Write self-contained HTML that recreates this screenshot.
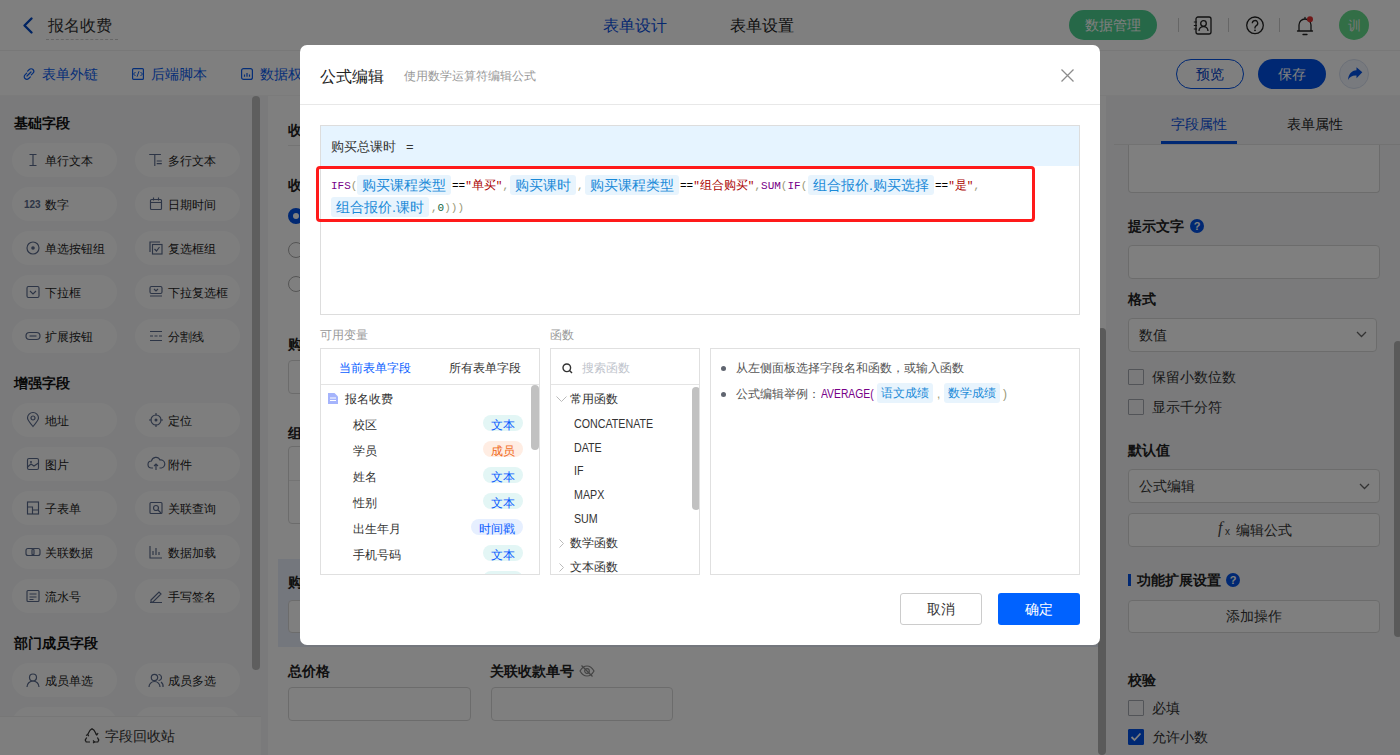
<!DOCTYPE html>
<html><head><meta charset="utf-8">
<style>
*{box-sizing:border-box;margin:0;padding:0}
html,body{width:1400px;height:755px;overflow:hidden;background:#fff;font-family:"Liberation Sans",sans-serif;color:#333}
.a{position:absolute}
.t{position:absolute;white-space:nowrap;line-height:1}
svg{position:absolute;overflow:visible}
/* background page */
#hdr{left:0;top:0;width:1400px;height:51px;background:#fff;border-bottom:1px solid #f0f0f0}
#tb{left:0;top:51px;width:1400px;height:45px;background:#fff;border-bottom:1px solid #f4f4f4}
#lp{left:0;top:96px;width:268px;height:659px;background:#f4f5f7}
.pill{position:absolute;width:105px;height:34px;border-radius:17px;background:#fdfdfd}
.pill .t{left:33px;top:12px;font-size:12px;color:#222}
.sec{position:absolute;left:14px;font-size:14px;font-weight:bold;color:#111}
#cv{left:268px;top:96px;width:838px;height:659px;background:#fff}
#rp{left:1106px;top:96px;width:294px;height:659px;background:#f4f5f7}
.lbl{position:absolute;font-size:14px;font-weight:bold;color:#222;white-space:nowrap;line-height:1}
.inp{position:absolute;background:#fff;border:1px solid #d9d9d9;border-radius:4px}
.cb{position:absolute;width:16px;height:16px;border:1px solid #a4a8b0;background:transparent;border-radius:1px}
#ov{left:0;top:0;width:1400px;height:755px;background:rgba(0,0,0,0.5)}
/* modal */
#md{left:300px;top:45px;width:800px;height:600px;background:#fff;border-radius:7px}
.m{position:absolute}
.tag{display:inline-block;background:#e8f4fd;color:#1f8ad8;border-radius:3px;padding:0 5px;font-family:"Liberation Sans",sans-serif}
.cs{position:absolute;height:20px;line-height:20px;font-family:"Liberation Mono",monospace;font-size:11px;color:#000;white-space:nowrap}
.kw{color:#708}.br{color:#997}.st{color:#a00}.nm{color:#164}
.tg{position:absolute;height:20px;line-height:20px;background:#e8f4fd;color:#1a8ad8;border-radius:3px;font-size:14px;text-align:center;white-space:nowrap}
.bd{position:absolute;height:16px;line-height:16px;padding:1.5px 8px 0;border-radius:8px;font-size:12px;white-space:nowrap}
.bdt{background:#e3f6f5;color:#0a5cff}.bdm{background:#ffede3;color:#f06a1a}.bdd{background:#e6efff;color:#0a5cff}
</style></head><body>
<!-- header -->
<div id="hdr" class="a"></div>
<svg style="left:22px;top:17px" width="12" height="17" viewBox="0 0 12 17"><path d="M9.5 1.5 L2.5 8.5 L9.5 15.5" fill="none" stroke="#0047c4" stroke-width="2.4" stroke-linecap="round" stroke-linejoin="round"/></svg>
<div class="t" style="left:48px;top:18px;font-size:16px;color:#333">报名收费</div>
<div class="a" style="left:46px;top:39px;width:72px;border-top:1px dashed #ccc"></div>
<div class="t" style="left:603px;top:18px;font-size:16px;color:#0a50e0">表单设计</div>
<div class="t" style="left:730px;top:18px;font-size:16px;color:#222">表单设置</div>
<div class="a" style="left:1069px;top:10px;width:88px;height:30px;border-radius:15px;background:#4cd090"></div>
<div class="t" style="left:1085px;top:18px;font-size:14px;color:#fff">数据管理</div>
<div class="a" style="left:1178px;top:18px;width:1px;height:14px;background:#ccc"></div>
<div class="a" style="left:1228px;top:18px;width:1px;height:14px;background:#ccc"></div>
<div class="a" style="left:1279px;top:18px;width:1px;height:14px;background:#ccc"></div>
<svg style="left:1193px;top:16px" width="20" height="19" viewBox="0 0 20 19"><rect x="3" y="1" width="15" height="17" rx="2" fill="none" stroke="#222" stroke-width="1.3"/><path d="M0.8 6h3.2M0.8 9.5h3.2M0.8 13h3.2" stroke="#222" stroke-width="1.2"/><circle cx="10.5" cy="7.5" r="2.8" fill="none" stroke="#222" stroke-width="1.3"/><path d="M6 15a4.5 4.5 0 0 1 9 0" fill="none" stroke="#222" stroke-width="1.3"/></svg>
<svg style="left:1245px;top:16px" width="20" height="19" viewBox="0 0 20 19"><circle cx="10" cy="9.3" r="8.3" fill="none" stroke="#222" stroke-width="1.3"/><path d="M7.3 7.2a2.7 2.7 0 1 1 4 2.4c-0.8 0.5-1.3 1-1.3 2v0.8" fill="none" stroke="#222" stroke-width="1.3"/><circle cx="10" cy="14.3" r="0.9" fill="#222"/></svg>
<svg style="left:1296px;top:15px" width="20" height="21" viewBox="0 0 20 21"><path d="M9 2.5v1.5M3 16V10a6 6 0 0 1 12 0v6M1.5 16h15M7 19.5h4" fill="none" stroke="#222" stroke-width="1.3" stroke-linecap="round"/><circle cx="14" cy="4.3" r="3" fill="#e03030"/></svg>
<div class="a" style="left:1339px;top:10px;width:30px;height:30px;border-radius:15px;background:#64dc8c"></div>
<div class="t" style="left:1348px;top:19px;font-size:13px;color:#f0f0f0">训</div>
<!-- toolbar -->
<div class="a" style="left:0;top:95px;width:1400px;height:1px;background:#f6f6f6"></div>
<svg style="left:22px;top:67px" width="14" height="14" viewBox="0 0 14 14"><path d="M5.6 4.2l1.7-1.7a2.6 2.6 0 0 1 3.7 3.7L9.3 7.9M8.4 9.8l-1.7 1.7a2.6 2.6 0 0 1-3.7-3.7l1.7-1.7M5 9l4-4" fill="none" stroke="#0a5cf0" stroke-width="1.2" stroke-linecap="round"/></svg>
<svg style="left:132px;top:68px" width="12" height="12" viewBox="0 0 12 12"><rect x="0.6" y="0.6" width="10.8" height="10.8" rx="1" fill="none" stroke="#0a5cf0" stroke-width="1.2"/><path d="M3.5 4l-2 2 2 2M8.5 4l2 2-2 2M7 3.2L5 8.8" fill="none" stroke="#0a5cf0" stroke-width="1"/></svg>
<svg style="left:241px;top:68px" width="12" height="12" viewBox="0 0 12 12"><rect x="0.6" y="0.6" width="10.8" height="10.8" rx="2" fill="none" stroke="#0a5cf0" stroke-width="1.2"/><path d="M3.5 6.5v2.2M6 5v3.7M8.5 6.5v2.2" stroke="#0a5cf0" stroke-width="1.2"/></svg>


<div class="t" style="left:42px;top:67px;font-size:14px;color:#0a5cf0">表单外链</div>
<div class="t" style="left:151px;top:67px;font-size:14px;color:#0a5cf0">后端脚本</div>
<div class="t" style="left:260px;top:67px;font-size:14px;color:#0a5cf0">数据权限</div>
<div class="a" style="left:1176px;top:59px;width:68px;height:30px;border-radius:15px;border:1px solid #0050e6;background:#fff"></div>
<div class="t" style="left:1196px;top:67px;font-size:14px;color:#0040c8">预览</div>
<div class="a" style="left:1258px;top:59px;width:68px;height:30px;border-radius:15px;background:#0050e6"></div>
<div class="t" style="left:1278px;top:67px;font-size:14px;color:#fff">保存</div>
<div class="a" style="left:1339px;top:59px;width:30px;height:30px;border-radius:15px;border:1px solid #d8e0f0;background:#f0f4fc"></div>
<svg style="left:1348px;top:67px" width="15" height="14" viewBox="0 0 15 14"><path d="M14.3 5.2L8.5 0.2v3C3.5 3.6 0.5 7 0 13c1.6-3.3 4.2-4.8 8.5-4.6v2.9z" fill="#0050e6"/></svg>

<!-- left panel -->
<div id="lp" class="a"></div>
<div class="pill" style="left:12px;top:143px">
<svg style="left:0;top:0" width="104" height="34"><g transform="translate(21,17)"><path d="M-3.5 -5.5h7M-3.5 5.5h7M0 -5.5v11" stroke="#5a6a8c" stroke-width="1.2" fill="none"/></g></svg><div class="t">单行文本</div>
</div>
<div class="pill" style="left:135px;top:143px">
<svg style="left:0;top:0" width="104" height="34"><g transform="translate(21,17)"><path d="M-6.8 -5.5h11.7M-1.2 -5.5v11.5M0.7 1h5.1M0.7 3.6h5.1" stroke="#5a6a8c" stroke-width="1.15" fill="none"/></g></svg><div class="t">多行文本</div>
</div>
<div class="pill" style="left:12px;top:187px">
<svg style="left:0;top:0" width="104" height="34"><g transform="translate(21,17)"><text x="-9" y="4" font-size="10" font-weight="bold" fill="#5a6a8c" font-family="Liberation Sans">123</text></g></svg><div class="t">数字</div>
</div>
<div class="pill" style="left:135px;top:187px">
<svg style="left:0;top:0" width="104" height="34"><g transform="translate(21,17)"><rect x="-5.5" y="-4.5" width="11" height="10" rx="1" stroke="#5a6a8c" stroke-width="1.15" fill="none"/><path d="M-5.5 -1.5h11M-2.5 -6.5v3M2.5 -6.5v3" stroke="#5a6a8c" stroke-width="1.15"/></g></svg><div class="t">日期时间</div>
</div>
<div class="pill" style="left:12px;top:231px">
<svg style="left:0;top:0" width="104" height="34"><g transform="translate(21,17)"><circle r="6" stroke="#5a6a8c" stroke-width="1.15" fill="none"/><circle r="1.8" fill="#5a6a8c"/></g></svg><div class="t">单选按钮组</div>
</div>
<div class="pill" style="left:135px;top:231px">
<svg style="left:0;top:0" width="104" height="34"><g transform="translate(21,17)"><path d="M-6 4v-10h10" stroke="#5a6a8c" stroke-width="1.2" fill="none"/><rect x="-3.5" y="-3.5" width="9.5" height="9.5" stroke="#5a6a8c" stroke-width="1.15" fill="none"/><path d="M-1.5 1l2 2 3-4" stroke="#5a6a8c" stroke-width="1.15" fill="none"/></g></svg><div class="t">复选框组</div>
</div>
<div class="pill" style="left:12px;top:275px">
<svg style="left:0;top:0" width="104" height="34"><g transform="translate(21,17)"><rect x="-6" y="-5.5" width="12" height="11" rx="1.5" stroke="#5a6a8c" stroke-width="1.15" fill="none"/><path d="M-3 -1l3 3 3-3" stroke="#5a6a8c" stroke-width="1.15" fill="none"/></g></svg><div class="t">下拉框</div>
</div>
<div class="pill" style="left:135px;top:275px">
<svg style="left:0;top:0" width="104" height="34"><g transform="translate(21,17)"><rect x="-6" y="-5.5" width="12" height="7" rx="1.5" stroke="#5a6a8c" stroke-width="1.15" fill="none"/><path d="M-6 4h12M-2 -3l2 2 2-2" stroke="#5a6a8c" stroke-width="1.15" fill="none"/></g></svg><div class="t">下拉复选框</div>
</div>
<div class="pill" style="left:12px;top:319px">
<svg style="left:0;top:0" width="104" height="34"><g transform="translate(21,17)"><rect x="-7" y="-3.5" width="14" height="7" rx="3.5" stroke="#5a6a8c" stroke-width="1.2" fill="none"/><path d="M-3.5 0h7" stroke="#5a6a8c" stroke-width="1.15"/></g></svg><div class="t">扩展按钮</div>
</div>
<div class="pill" style="left:135px;top:319px">
<svg style="left:0;top:0" width="104" height="34"><g transform="translate(21,17)"><path d="M-6 -4.5h12M-6 4.5h12M-6 0h3M-1.5 0h3M3 0h3" stroke="#5a6a8c" stroke-width="1.15" fill="none"/></g></svg><div class="t">分割线</div>
</div>
<div class="pill" style="left:12px;top:403px">
<svg style="left:0;top:0" width="104" height="34"><g transform="translate(21,17)"><path d="M0 6.5C-3 3-5.5 0-5.5 -2A5.5 5.5 0 0 1 5.5 -2C5.5 0 3 3 0 6.5z" stroke="#5a6a8c" stroke-width="1.15" fill="none"/><circle cy="-2" r="2" stroke="#5a6a8c" stroke-width="1.2" fill="none"/></g></svg><div class="t">地址</div>
</div>
<div class="pill" style="left:135px;top:403px">
<svg style="left:0;top:0" width="104" height="34"><g transform="translate(21,17)"><circle r="5" stroke="#5a6a8c" stroke-width="1.15" fill="none"/><circle r="1.5" fill="#5a6a8c"/><path d="M0 -7v2.5M0 7v-2.5M-7 0h2.5M7 0h-2.5" stroke="#5a6a8c" stroke-width="1.15"/></g></svg><div class="t">定位</div>
</div>
<div class="pill" style="left:12px;top:447px">
<svg style="left:0;top:0" width="104" height="34"><g transform="translate(21,17)"><rect x="-5.5" y="-5.5" width="11" height="11" rx="1.5" stroke="#5a6a8c" stroke-width="1.15" fill="none"/><path d="M-5.5 3l3.5-3 3 2 4.5-3" stroke="#5a6a8c" stroke-width="1.2" fill="none"/><circle cx="-2" cy="-2" r="1" fill="#5a6a8c"/></g></svg><div class="t">图片</div>
</div>
<div class="pill" style="left:135px;top:447px">
<svg style="left:0;top:0" width="104" height="34"><g transform="translate(21,17)"><path d="M-3 4h-1.5a3.5 3.5 0 0 1 0-7a4.5 4.5 0 0 1 8.5-1a3 3 0 0 1 1.5 8h-2" stroke="#5a6a8c" stroke-width="1.15" fill="none"/><path d="M0 6v-6M-2 2l2-2 2 2" stroke="#5a6a8c" stroke-width="1.15" fill="none"/></g></svg><div class="t">附件</div>
</div>
<div class="pill" style="left:12px;top:491px">
<svg style="left:0;top:0" width="104" height="34"><g transform="translate(21,17)"><rect x="-5.5" y="-6" width="11" height="12" stroke="#5a6a8c" stroke-width="1.15" fill="none"/><path d="M-5.5 -1h5v7M-0.5 2h6" stroke="#5a6a8c" stroke-width="1.15" fill="none"/></g></svg><div class="t">子表单</div>
</div>
<div class="pill" style="left:135px;top:491px">
<svg style="left:0;top:0" width="104" height="34"><g transform="translate(21,17)"><rect x="-6" y="-5.5" width="12" height="11" rx="1" stroke="#5a6a8c" stroke-width="1.15" fill="none"/><circle cx="0" cy="0" r="2.5" stroke="#5a6a8c" stroke-width="1.2" fill="none"/><path d="M2 2l3 3" stroke="#5a6a8c" stroke-width="1.15"/></g></svg><div class="t">关联查询</div>
</div>
<div class="pill" style="left:12px;top:535px">
<svg style="left:0;top:0" width="104" height="34"><g transform="translate(21,17)"><rect x="-7" y="-3.5" width="8" height="7" rx="2" stroke="#5a6a8c" stroke-width="1.15" fill="none"/><rect x="-1" y="-3.5" width="8" height="7" rx="2" stroke="#5a6a8c" stroke-width="1.15" fill="none"/></g></svg><div class="t">关联数据</div>
</div>
<div class="pill" style="left:135px;top:535px">
<svg style="left:0;top:0" width="104" height="34"><g transform="translate(21,17)"><path d="M-6 -6v12h12M-3 3v-4M0 3v-7M3 3v-3" stroke="#5a6a8c" stroke-width="1.15" fill="none"/></g></svg><div class="t">数据加载</div>
</div>
<div class="pill" style="left:12px;top:579px">
<svg style="left:0;top:0" width="104" height="34"><g transform="translate(21,17)"><rect x="-6" y="-5.5" width="12" height="11" rx="1" stroke="#5a6a8c" stroke-width="1.15" fill="none"/><path d="M-3.5 -2h7M-3.5 1h7M-3.5 3.5h4" stroke="#5a6a8c" stroke-width="1.2" fill="none"/></g></svg><div class="t">流水号</div>
</div>
<div class="pill" style="left:135px;top:579px">
<svg style="left:0;top:0" width="104" height="34"><g transform="translate(21,17)"><path d="M-5 4l8-8 2 2-8 8h-2zM-6 6.5h12" stroke="#5a6a8c" stroke-width="1.15" fill="none"/></g></svg><div class="t">手写签名</div>
</div>
<div class="pill" style="left:12px;top:663px">
<svg style="left:0;top:0" width="104" height="34"><g transform="translate(21,17)"><circle cy="-2.5" r="3.5" stroke="#5a6a8c" stroke-width="1.2" fill="none"/><path d="M-6 7a6 6 0 0 1 12 0" stroke="#5a6a8c" stroke-width="1.2" fill="none"/></g></svg><div class="t">成员单选</div>
</div>
<div class="pill" style="left:135px;top:663px">
<svg style="left:0;top:0" width="104" height="34"><g transform="translate(21,17)"><circle cx="-1.5" cy="-2.5" r="3.2" stroke="#5a6a8c" stroke-width="1.2" fill="none"/><path d="M-7 7a5.5 5.5 0 0 1 11 0M2.5 -5.5a3 3 0 0 1 0 6M5 2a5 5 0 0 1 2 5" stroke="#5a6a8c" stroke-width="1.2" fill="none"/></g></svg><div class="t">成员多选</div>
</div>
<div class="pill" style="left:12px;top:707px">
</div>
<div class="pill" style="left:135px;top:707px">
</div>
<div class="a" style="left:0;top:716px;width:261px;height:39px;background:#fcfcfc;border-top:1px solid #eee"></div>
<svg style="left:84px;top:728px" width="16" height="15" viewBox="0 0 16 15"><path d="M6 2.2L8 0.8l2 1.4 2.6 4.6M13.4 9.5l1.4 2.6-1 1.9H10M6 14H2.2l-1-1.9 1.5-2.6M3.7 6.5L6 2.2" fill="none" stroke="#333" stroke-width="1.2"/><path d="M11.5 5.5l1.3 1.5 1.3-2M9 12.5l1.5 1.5-1.5 1M2 7.5l1.8-1 1 1.8" fill="none" stroke="#333" stroke-width="1.1"/></svg>
<div class="t" style="left:105px;top:729px;font-size:14px;color:#333">字段回收站</div>
<div class="sec t" style="top:116px">基础字段</div>
<div class="sec t" style="top:376px">增强字段</div>
<div class="sec t" style="top:636px">部门成员字段</div>
<div class="a" style="left:252px;top:96px;width:8px;height:574px;border-radius:4px;background:#bdbdbd"></div>

<!-- canvas -->
<div id="cv" class="a"></div>
<div class="lbl" style="left:288px;top:123px">收费信息</div>
<div class="a" style="left:288px;top:145px;width:780px;height:1px;background:#e8e8e8"></div>
<div class="lbl" style="left:288px;top:178px">收费类型</div>
<div class="a" style="left:288px;top:208px;width:16px;height:16px;border-radius:8px;border:5px solid #0050e6;background:#fff"></div>
<div class="a" style="left:288px;top:242px;width:16px;height:16px;border-radius:8px;border:1px solid #aaa;background:#fff"></div>
<div class="a" style="left:288px;top:276px;width:16px;height:16px;border-radius:8px;border:1px solid #aaa;background:#fff"></div>
<div class="lbl" style="left:288px;top:337px">购买课程类型</div>
<div class="inp" style="left:288px;top:360px;width:380px;height:34px"></div>
<div class="lbl" style="left:288px;top:426px">组合报价</div>
<div class="inp" style="left:288px;top:446px;width:780px;height:78px"></div>
<div class="a" style="left:289px;top:480px;width:778px;height:1px;background:#e8e8e8"></div>
<div class="a" style="left:278px;top:559px;width:820px;height:88px;background:#e9eefa"></div>
<div class="lbl" style="left:288px;top:575px">购买总课时</div>
<div class="inp" style="left:288px;top:600px;width:380px;height:33px"></div>
<div class="lbl" style="left:288px;top:664px">总价格</div>
<div class="inp" style="left:288px;top:687px;width:183px;height:34px"></div>
<div class="lbl" style="left:490px;top:664px">关联收款单号</div>
<svg style="left:579px;top:664px" width="16" height="14" viewBox="0 0 16 14"><path d="M1 7C3 3.5 5.5 2 8 2s5 1.5 7 5c-2 3.5-4.5 5-7 5S3 10.5 1 7z" fill="none" stroke="#888" stroke-width="1.2"/><circle cx="8" cy="7" r="2.3" fill="none" stroke="#888" stroke-width="1.2"/><path d="M2.5 1.5l11 11" stroke="#888" stroke-width="1.2"/></svg>
<div class="inp" style="left:491px;top:687px;width:182px;height:34px"></div>

<!-- right panel -->
<div id="rp" class="a"></div>
<div class="t" style="left:1171px;top:117px;font-size:14px;color:#0a50e0">字段属性</div>
<div class="t" style="left:1287px;top:117px;font-size:14px;color:#222">表单属性</div>
<div class="a" style="left:1114px;top:144px;width:286px;height:1px;background:#e4e4e4"></div>
<div class="a" style="left:1161px;top:141px;width:76px;height:3px;background:#0050e6"></div>
<div class="inp" style="left:1128px;top:145px;width:252px;height:48px;border-top:none;border-radius:0 0 4px 4px"></div>
<div class="lbl" style="left:1128px;top:219px">提示文字</div>
<div class="a" style="left:1190px;top:219px;width:14px;height:14px;border-radius:7px;background:#0050e6;color:#fff;font-size:11px;font-weight:bold;line-height:14px;text-align:center">?</div>
<div class="inp" style="left:1128px;top:245px;width:252px;height:34px"></div>
<div class="lbl" style="left:1128px;top:292px">格式</div>
<div class="inp" style="left:1128px;top:318px;width:249px;height:34px"></div>
<div class="t" style="left:1139px;top:328px;font-size:14px;color:#333">数值</div>
<svg style="left:1356px;top:331px" width="11" height="7" viewBox="0 0 11 7"><path d="M1 1l4.5 4.5L10 1" fill="none" stroke="#666" stroke-width="1.3"/></svg>
<div class="cb" style="left:1128px;top:369px"></div>
<div class="t" style="left:1152px;top:370px;font-size:14px;color:#333">保留小数位数</div>
<div class="cb" style="left:1128px;top:399px"></div>
<div class="t" style="left:1152px;top:400px;font-size:14px;color:#333">显示千分符</div>
<div class="lbl" style="left:1128px;top:443px">默认值</div>
<div class="inp" style="left:1128px;top:469px;width:252px;height:34px"></div>
<div class="t" style="left:1139px;top:479px;font-size:14px;color:#333">公式编辑</div>
<svg style="left:1359px;top:483px" width="11" height="7" viewBox="0 0 11 7"><path d="M1 1l4.5 4.5L10 1" fill="none" stroke="#666" stroke-width="1.3"/></svg>
<div class="inp" style="left:1128px;top:513px;width:252px;height:34px"></div>
<div class="t" style="left:1218px;top:520px;font-size:16px;font-style:italic;color:#444;font-family:'Liberation Serif',serif">f</div><div class="t" style="left:1225px;top:527px;font-size:10px;color:#444">x</div>
<div class="t" style="left:1236px;top:523px;font-size:14px;color:#333">编辑公式</div>
<div class="a" style="left:1128px;top:574px;width:3px;height:12px;background:#0050e6"></div>
<div class="lbl" style="left:1137px;top:573px">功能扩展设置</div>
<div class="a" style="left:1226px;top:573px;width:14px;height:14px;border-radius:7px;background:#0050e6;color:#fff;font-size:11px;font-weight:bold;line-height:14px;text-align:center">?</div>
<div class="inp" style="left:1128px;top:600px;width:252px;height:33px"></div>
<div class="t" style="left:1226px;top:609px;font-size:14px;color:#333">添加操作</div>
<div class="lbl" style="left:1128px;top:673px">校验</div>
<div class="cb" style="left:1128px;top:700px"></div>
<div class="t" style="left:1152px;top:701px;font-size:14px;color:#333">必填</div>
<div class="cb" style="left:1128px;top:729px;background:#0050e6;border-color:#0050e6"></div>
<svg style="left:1128px;top:729px" width="16" height="16" viewBox="0 0 16 16"><path d="M3.5 8l3 3 6-6.5" fill="none" stroke="#fff" stroke-width="1.8"/></svg>
<div class="t" style="left:1152px;top:730px;font-size:14px;color:#333">允许小数</div>

<div class="a" style="left:1098px;top:328px;width:8px;height:427px;border-radius:4px;background:#b4b4b4"></div>
<div class="a" style="left:1394px;top:341px;width:8px;height:296px;border-radius:4px;background:#b4b4b4"></div>

<div id="ov" class="a"></div>
<div id="md" class="a">
<div class="t m" style="left:20px;top:24px;font-size:16px;color:#222">公式编辑</div>
<div class="t m" style="left:104px;top:25px;font-size:12px;color:#999">使用数学运算符编辑公式</div>
<svg style="left:761px;top:24px" width="13" height="13" viewBox="0 0 13 13"><path d="M0.5 0.5l12 12M12.5 0.5l-12 12" stroke="#8c8c8c" stroke-width="1.3"/></svg>
<div class="m" style="left:0;top:59px;width:800px;height:1px;background:#e8e8e8"></div>
<!-- editor -->
<div class="m" style="left:20px;top:80px;width:760px;height:190px;border:1px solid #ddd;background:#fff"></div>
<div class="m" style="left:21px;top:81px;width:758px;height:40px;background:#e6f4ff"></div>
<div class="t m" style="left:31px;top:95px;font-size:13px;color:#333">购买总课时<span style="margin-left:10px">=</span></div>
</div>
<div id="code" class="a" style="left:0;top:0">
<div class="cs" style="left:331px;top:176px"><span class="kw">IFS</span><span class="br">(</span></div>
<div class="tg" style="left:357px;top:175px;width:94px">购买课程类型</div>
<div class="cs" style="left:452px;top:176px">==<span class="st">"<span style="font-size:12px">单买</span>"</span><span class="br">,</span></div>
<div class="tg" style="left:510px;top:175px;width:66px">购买课时</div>
<div class="cs" style="left:577px;top:176px"><span class="br">,</span></div>
<div class="tg" style="left:585px;top:175px;width:94px">购买课程类型</div>
<div class="cs" style="left:680px;top:176px">==<span class="st">"<span style="font-size:12px">组合购买</span>"</span><span class="br">,</span><span class="kw">SUM</span><span class="br">(</span><span class="kw">IF</span><span class="br">(</span></div>
<div class="tg" style="left:808px;top:175px;width:126px">组合报价.购买选择</div>
<div class="cs" style="left:935px;top:176px">==<span class="st">"<span style="font-size:12px">是</span>"</span><span class="br">,</span></div>
<div class="tg" style="left:331px;top:197px;width:98px">组合报价.课时</div>
<div class="cs" style="left:431px;top:198px"><span class="br">,</span><span class="nm">0</span><span class="br">)))</span></div>
<div class="a" style="left:316px;top:166px;width:719px;height:56px;border:3px solid #ff1a1a;border-radius:4px"></div>
</div>
<!-- lower panels -->
<div class="t" style="left:320px;top:329px;font-size:12px;color:#999">可用变量</div>
<div class="t" style="left:550px;top:329px;font-size:12px;color:#999">函数</div>
<div class="a" style="left:320px;top:348px;width:220px;height:227px;border:1px solid #e0e0e0;background:#fff;overflow:hidden" id="vp">
<div class="t" style="left:18px;top:13px;font-size:12px;color:#0a60ff">当前表单字段</div>
<div class="t" style="left:128px;top:13px;font-size:12px;color:#333">所有表单字段</div>
<div class="a" style="left:0;top:35px;width:220px;height:1px;background:#e4e4e4"></div>
<svg style="left:7px;top:44px" width="10" height="11" viewBox="0 0 10 11"><path d="M0 0h6.5l3.5 3.5V11H0z" fill="#a5b4fc"/><path d="M2 5h6M2 7.5h6" stroke="#fff" stroke-width="1"/></svg>
<div class="t" style="left:24px;top:44px;font-size:12px;color:#333">报名收费</div>
<div class="t" style="left:32px;top:70px;font-size:12px;color:#333">校区</div>
<div class="bd bdt" style="right:16px;top:66px">文本</div>
<div class="t" style="left:32px;top:96px;font-size:12px;color:#333">学员</div>
<div class="bd bdm" style="right:16px;top:92px">成员</div>
<div class="t" style="left:32px;top:122px;font-size:12px;color:#333">姓名</div>
<div class="bd bdt" style="right:16px;top:118px">文本</div>
<div class="t" style="left:32px;top:148px;font-size:12px;color:#333">性别</div>
<div class="bd bdt" style="right:16px;top:144px">文本</div>
<div class="t" style="left:32px;top:174px;font-size:12px;color:#333">出生年月</div>
<div class="bd bdd" style="right:16px;top:170px">时间戳</div>
<div class="t" style="left:32px;top:200px;font-size:12px;color:#333">手机号码</div>
<div class="bd bdt" style="right:16px;top:196px">文本</div>
<div class="t" style="left:32px;top:226px;font-size:12px;color:#333"></div>
<div class="bd bdt" style="right:16px;top:222px">文本</div>
<div class="a" style="left:210px;top:36px;width:8px;height:65px;border-radius:4px;background:#c1c1c1"></div>
</div>
<div class="a" style="left:550px;top:348px;width:150px;height:227px;border:1px solid #e0e0e0;background:#fff;overflow:hidden" id="fp">
<svg style="left:11px;top:14px" width="11" height="11" viewBox="0 0 11 11"><circle cx="4.8" cy="4.8" r="3.8" fill="none" stroke="#333" stroke-width="1.4"/><path d="M7.5 7.5l2.5 2.5" stroke="#333" stroke-width="1.4"/></svg>
<div class="t" style="left:31px;top:13px;font-size:12px;color:#c0c4cc">搜索函数</div>
<div class="a" style="left:0;top:35px;width:150px;height:1px;background:#e4e4e4"></div>
<svg style="left:5px;top:47px" width="11" height="7" viewBox="0 0 11 7"><path d="M0.5 0.5l5 5 5-5" fill="none" stroke="#bbb" stroke-width="1"/></svg>
<div class="t" style="left:19px;top:44px;font-size:12px;color:#333">常用函数</div>
<div class="t" style="left:23px;top:69px;font-size:12px;color:#333;transform:scaleX(0.89);transform-origin:0 0">CONCATENATE</div>
<div class="t" style="left:23px;top:93px;font-size:12px;color:#333;transform:scaleX(0.89);transform-origin:0 0">DATE</div>
<div class="t" style="left:23px;top:116px;font-size:12px;color:#333;transform:scaleX(0.89);transform-origin:0 0">IF</div>
<div class="t" style="left:23px;top:140px;font-size:12px;color:#333;transform:scaleX(0.89);transform-origin:0 0">MAPX</div>
<div class="t" style="left:23px;top:164px;font-size:12px;color:#333;transform:scaleX(0.89);transform-origin:0 0">SUM</div>
<svg style="left:8px;top:190px" width="5" height="9" viewBox="0 0 5 9"><path d="M0.5 0.5l4 4-4 4" fill="none" stroke="#bbb" stroke-width="1"/></svg><div class="t" style="left:19px;top:188px;font-size:12px;color:#333">数学函数</div>
<svg style="left:8px;top:214px" width="5" height="9" viewBox="0 0 5 9"><path d="M0.5 0.5l4 4-4 4" fill="none" stroke="#bbb" stroke-width="1"/></svg><div class="t" style="left:19px;top:212px;font-size:12px;color:#333">文本函数</div>
<div class="a" style="left:141px;top:38px;width:8px;height:123px;border-radius:4px;background:#c1c1c1"></div>
</div>
<div class="a" style="left:710px;top:348px;width:370px;height:227px;border:1px solid #e0e0e0;background:#fff" id="dp">
<div class="a" style="left:10px;top:17px;width:5px;height:5px;border-radius:3px;background:#606570"></div>
<div class="t" style="left:25px;top:13px;font-size:12px;color:#555">从左侧面板选择字段名和函数，或输入函数</div>
<div class="a" style="left:10px;top:43px;width:5px;height:5px;border-radius:3px;background:#606570"></div>
<div class="t" style="left:25px;top:39px;font-size:12px;color:#555">公式编辑举例：</div>
<div class="t" style="left:110px;top:39px;font-size:12px;color:#708;transform:scaleX(0.86);transform-origin:0 0">AVERAGE(</div>
<div class="tg" style="left:166px;top:34px;width:56px;height:20px;font-size:12px">语文成绩</div>
<div class="t" style="left:226px;top:39px;font-size:12px;color:#997">,</div>
<div class="tg" style="left:233px;top:34px;width:56px;height:20px;font-size:12px">数学成绩</div>
<div class="t" style="left:292px;top:39px;font-size:12px;color:#997">)</div>
</div>
<div class="a" style="left:900px;top:593px;width:82px;height:32px;border:1px solid #ccc;border-radius:3px;background:#fff"></div>
<div class="t" style="left:927px;top:602px;font-size:14px;color:#333">取消</div>
<div class="a" style="left:998px;top:593px;width:82px;height:32px;border-radius:3px;background:#0062ff"></div>
<div class="t" style="left:1025px;top:602px;font-size:14px;color:#fff;font-weight:500">确定</div>

</body></html>
